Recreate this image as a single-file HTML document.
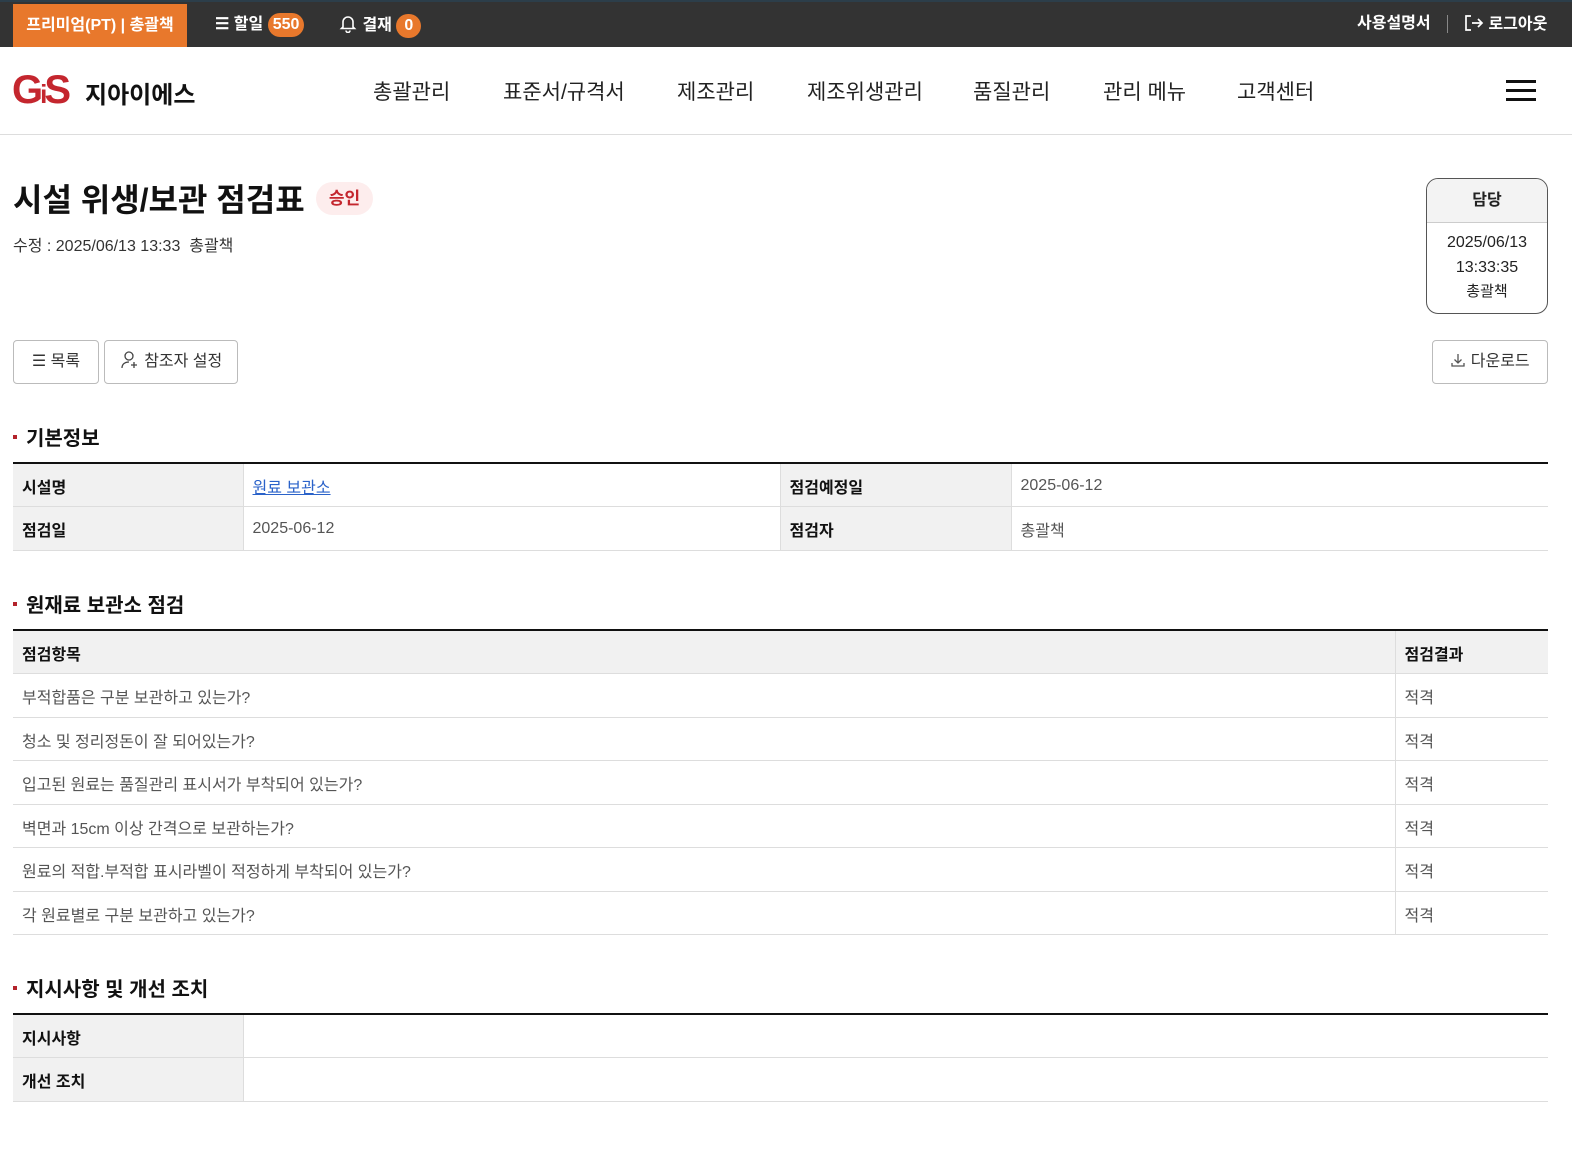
<!DOCTYPE html>
<html style="overflow:hidden"><head><meta charset="utf-8"><style>
*{box-sizing:border-box;margin:0;padding:0}
html,body{overflow:hidden}
body{width:1572px;height:1162px;background:#fff;font-family:"Liberation Sans","Noto Sans CJK KR",sans-serif;color:#222;position:relative}
.abs{position:absolute}
.top{left:0;top:0;width:1572px;height:47px;background:#333;border-top:2px solid #2c3e4a}
.ob{left:13px;top:4px;width:174px;height:43px;background:#e8782c;color:#fff;font-size:16px;font-weight:bold;line-height:43px;text-align:center}
.tw{color:#fff;font-size:16px;font-weight:bold;line-height:20px}
.pill{display:inline-block;background:#e8782c;color:#fff;border-radius:12px;padding:0 5px;font-size:16px;line-height:24px;vertical-align:middle}
.hdr{left:0;top:47px;width:1572px;height:88px;border-bottom:1px solid #ddd}
.nav{top:76px;font-size:21px;color:#222}
.btn{border:1px solid #bbb;border-radius:4px;height:44px;top:340px;font-size:16px;color:#333;line-height:42px;text-align:center;background:#fff}
.sec{left:13px;font-size:20px;font-weight:bold;color:#111}
.sec:before{content:"";display:inline-block;width:4px;height:4px;background:#b3232b;margin:0 9px 5px 0;vertical-align:middle}
table{border-collapse:collapse;position:absolute;left:13px;width:1535px;border-top:2px solid #111;font-size:16px}
td,th{height:43.5px;border-bottom:1px solid #ddd;padding:2px 9px 0;text-align:left;vertical-align:middle}
th{background:#f1f1f1;font-weight:bold;color:#111}
td{color:#555}
.bl{border-left:1px solid #ddd}
</style></head><body>
<div class="abs top"></div>
<div class="abs ob">프리미엄(PT) | 총괄책</div>
<div class="abs tw" style="left:215px;top:13px">☰ 할일 <span class="pill">550</span></div>
<div class="abs tw" style="left:338px;top:13px"><svg width="20" height="20" viewBox="0 0 20 20" style="vertical-align:-3px"><path d="M5 14V9a5 5 0 0110 0v5l1.5 1.5h-13zM8 17.5a2 2 0 004 0" fill="none" stroke="#fff" stroke-width="1.6"/></svg> 결재 <span class="pill" style="padding:0 8px">0</span></div>
<div class="abs tw" style="left:1357px;top:14px">사용설명서</div>
<div class="abs" style="left:1447px;top:15px;width:1px;height:18px;background:#888"></div>
<div class="abs tw" style="left:1464px;top:14px"><svg width="20" height="18" viewBox="0 0 20 18" style="vertical-align:-3px"><path d="M7 2H2v14h5M8 9h10M14 5l4 4-4 4" fill="none" stroke="#fff" stroke-width="1.7"/></svg> 로그아웃</div>
<div class="abs hdr"></div>
<div class="abs" style="left:12px;top:70px;font-size:40px;font-weight:900;color:#c4262e;letter-spacing:-3px;font-family:'Liberation Sans',sans-serif;line-height:40px">G<span style="font-size:26px">i</span>S</div>
<div class="abs" style="left:85px;top:75px;font-size:24px;font-weight:bold;color:#111">지아이에스</div>
<div class="abs nav" style="left:373px">총괄관리</div>
<div class="abs nav" style="left:503px">표준서/규격서</div>
<div class="abs nav" style="left:677px">제조관리</div>
<div class="abs nav" style="left:807px">제조위생관리</div>
<div class="abs nav" style="left:973px">품질관리</div>
<div class="abs nav" style="left:1103px">관리 메뉴</div>
<div class="abs nav" style="left:1237px">고객센터</div>
<div class="abs" style="left:1506px;top:80px;width:30px;height:3px;background:#111;box-shadow:0 9px 0 #111,0 18px 0 #111"></div>

<div class="abs" style="left:13px;top:175px;font-size:32px;font-weight:bold;color:#111">시설 위생/보관 점검표</div>
<div class="abs" style="left:316px;top:182px;width:57px;height:33px;border-radius:17px;background:#fdeded;color:#c4262e;font-size:17px;font-weight:bold;line-height:33px;text-align:center">승인</div>
<div class="abs" style="left:13px;top:232px;font-size:16px;color:#333">수정 : 2025/06/13 13:33&nbsp; 총괄책</div>

<div class="abs" style="left:1426px;top:178px;width:122px;height:136px;border:1px solid #555;border-radius:12px;overflow:hidden;text-align:center">
<div style="height:44px;background:#f3f3f3;border-bottom:1px solid #ccc;line-height:43px;font-size:16px;font-weight:bold;color:#222">담당</div>
<div style="font-size:16px;line-height:24.5px;padding-top:8px;color:#222">2025/06/13<br>13:33:35<br><span style="font-size:15px">총괄책</span></div>
</div>

<div class="abs btn" style="left:13px;width:86px">☰ 목록</div>
<div class="abs btn" style="left:104px;width:134px"><svg width="20" height="20" viewBox="0 0 20 20" style="vertical-align:-4px"><circle cx="9" cy="6" r="4" fill="none" stroke="#444" stroke-width="1.3"/><path d="M2 18c0-4 3-6 7-6M14 12v6M11 15h6" fill="none" stroke="#444" stroke-width="1.3"/></svg> 참조자 설정</div>
<div class="abs btn" style="left:1432px;width:116px"><svg width="16" height="16" viewBox="0 0 16 16" style="vertical-align:-2px"><path d="M8 2v9M4.5 7.5L8 11l3.5-3.5M2 11v3h12v-3" fill="none" stroke="#555" stroke-width="1.3"/></svg> 다운로드</div>

<div class="abs sec" style="top:422px">기본정보</div>
<table style="top:462px">
<tr><th style="width:230px">시설명</th><td class="bl" style="width:537px"><a style="color:#2a62c9;text-decoration:underline">원료 보관소</a></td><th class="bl" style="width:231px">점검예정일</th><td class="bl">2025-06-12</td></tr>
<tr><th>점검일</th><td class="bl">2025-06-12</td><th class="bl">점검자</th><td class="bl">총괄책</td></tr>
</table>

<div class="abs sec" style="top:589px">원재료 보관소 점검</div>
<table style="top:629px">
<tr><th>점검항목</th><th class="bl" style="width:153px">점검결과</th></tr>
<tr><td>부적합품은 구분 보관하고 있는가?</td><td class="bl">적격</td></tr>
<tr><td>청소 및 정리정돈이 잘 되어있는가?</td><td class="bl">적격</td></tr>
<tr><td>입고된 원료는 품질관리 표시서가 부착되어 있는가?</td><td class="bl">적격</td></tr>
<tr><td>벽면과 15cm 이상 간격으로 보관하는가?</td><td class="bl">적격</td></tr>
<tr><td>원료의 적합.부적합 표시라벨이 적정하게 부착되어 있는가?</td><td class="bl">적격</td></tr>
<tr><td>각 원료별로 구분 보관하고 있는가?</td><td class="bl">적격</td></tr>
</table>

<div class="abs sec" style="top:973px">지시사항 및 개선 조치</div>
<table style="top:1013px">
<tr><th style="width:230px">지시사항</th><td class="bl"></td></tr>
<tr><th>개선 조치</th><td class="bl"></td></tr>
</table>
</body></html>
